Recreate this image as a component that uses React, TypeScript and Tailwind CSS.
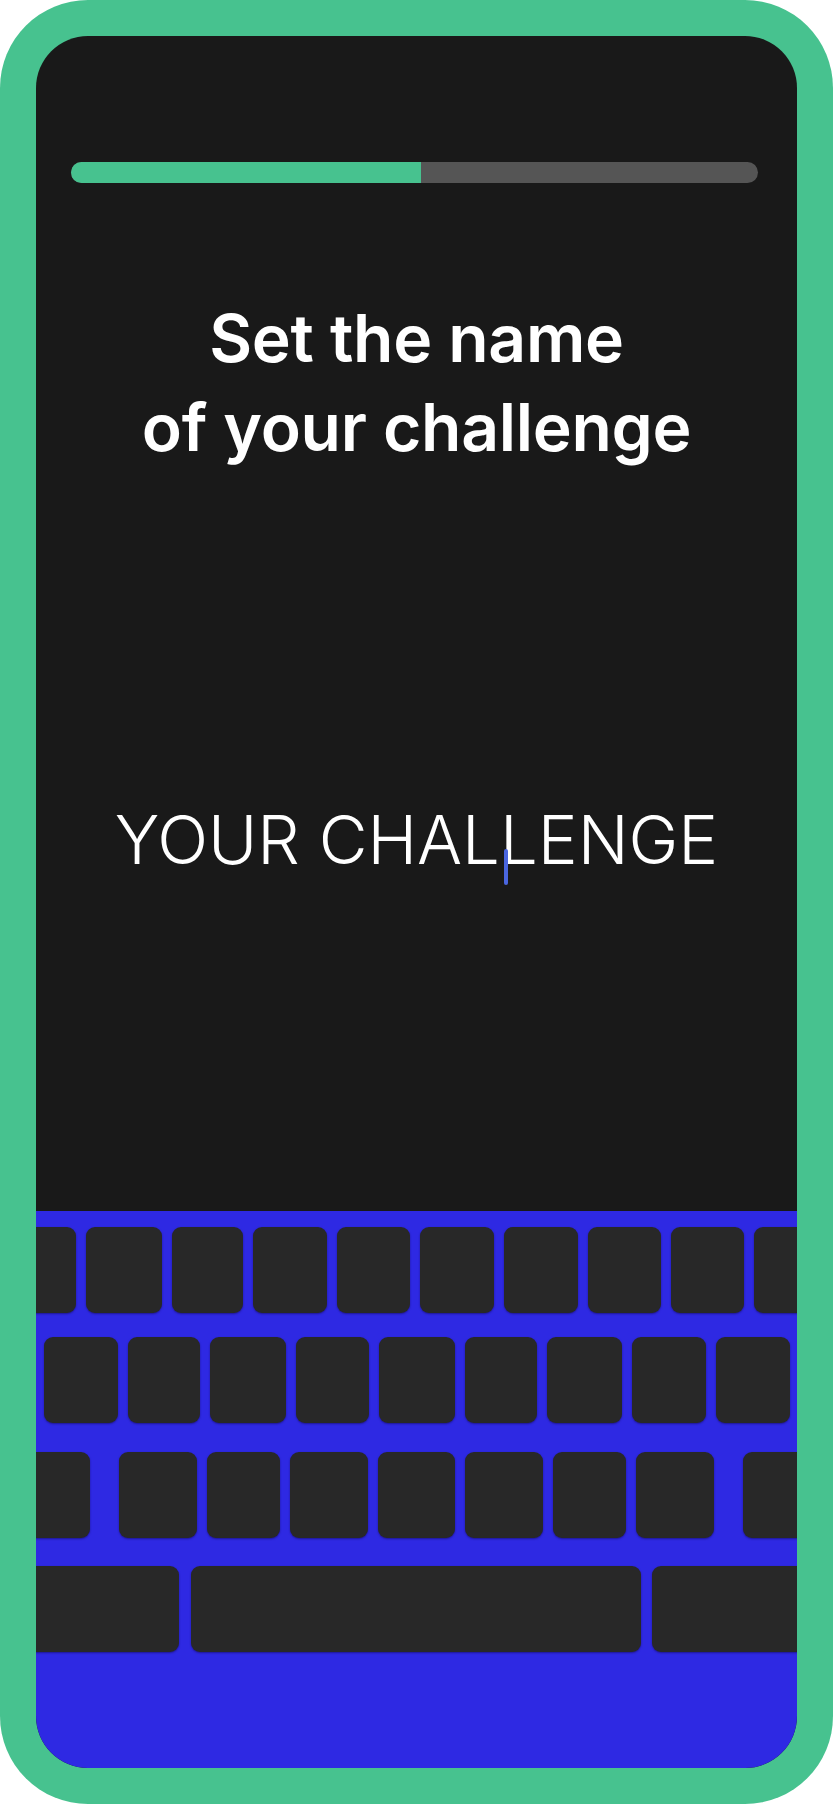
import React from 'react';

type Key = { w: string; ml: string };

// keyboard rows, widths and left offsets measured from the mock
const ROWS: Key[][] = [
  [
    { w: 'w-[73px]', ml: 'ml-[-33px]' },
    { w: 'w-[76px]', ml: 'ml-[10px]' },
    { w: 'w-[71px]', ml: 'ml-[10px]' },
    { w: 'w-[74px]', ml: 'ml-[10px]' },
    { w: 'w-[73px]', ml: 'ml-[10px]' },
    { w: 'w-[74px]', ml: 'ml-[10px]' },
    { w: 'w-[74px]', ml: 'ml-[10px]' },
    { w: 'w-[73px]', ml: 'ml-[10px]' },
    { w: 'w-[73px]', ml: 'ml-[10px]' },
    { w: 'w-[74px]', ml: 'ml-[10px]' },
  ],
  [
    { w: 'w-[74px]', ml: 'ml-[8px]' },
    { w: 'w-[72px]', ml: 'ml-[10px]' },
    { w: 'w-[76px]', ml: 'ml-[10px]' },
    { w: 'w-[73px]', ml: 'ml-[10px]' },
    { w: 'w-[76px]', ml: 'ml-[10px]' },
    { w: 'w-[72px]', ml: 'ml-[10px]' },
    { w: 'w-[75px]', ml: 'ml-[10px]' },
    { w: 'w-[74px]', ml: 'ml-[10px]' },
    { w: 'w-[74px]', ml: 'ml-[10px]' },
  ],
  [
    { w: 'w-[80px]', ml: 'ml-[-26px]' },
    { w: 'w-[78px]', ml: 'ml-[29px]' },
    { w: 'w-[73px]', ml: 'ml-[10px]' },
    { w: 'w-[78px]', ml: 'ml-[10px]' },
    { w: 'w-[77px]', ml: 'ml-[10px]' },
    { w: 'w-[78px]', ml: 'ml-[10px]' },
    { w: 'w-[73px]', ml: 'ml-[10px]' },
    { w: 'w-[78px]', ml: 'ml-[10px]' },
    { w: 'w-[80px]', ml: 'ml-[29px]' },
  ],
  [
    { w: 'w-[183px]', ml: 'ml-[-40px]' },
    { w: 'w-[450px]', ml: 'ml-[12px]' },
    { w: 'w-[180px]', ml: 'ml-[11px]' },
  ],
];

const ROW_GAPS = ['mt-[16px]', 'mt-[24px]', 'mt-[29px]', 'mt-[28px]'];

const Keyboard = () => (
  <div className="h-[557px] shrink-0 bg-[#2e29e3] overflow-hidden">
    {ROWS.map((row, r) => (
      <div key={r} className={`flex ${ROW_GAPS[r]}`}>
        {row.map((k, i) => (
          <div
            key={i}
            className={`${k.w} ${k.ml} h-[86px] shrink-0 rounded-[9px] bg-[#282828] shadow-[0_1px_2px_rgba(20,10,90,0.6)]`}
          />
        ))}
      </div>
    ))}
  </div>
);

export default function App() {
  return (
    <div className="w-[833px] h-[1804px] bg-white">
      <div className="w-full h-full rounded-[88px] bg-[#47c28f] p-[36px]">
        <div className="w-full h-full rounded-[52px] bg-[#191919] overflow-hidden flex flex-col">
          <div className="flex-1 flex flex-col">
            {/* progress */}
            <div className="mt-[126px] ml-[35px] w-[687px] h-[21px] rounded-full bg-[#555555] overflow-hidden flex">
              <div className="w-[350px] h-full bg-[#47c28f]" />
            </div>

            <h1
              className="mt-[111px] text-center text-white font-semibold text-[66px] leading-[89px] tracking-[-0.3px]"
              style={{ fontFamily: 'Inter, "Noto Sans", sans-serif' }}
            >
              Set the name
              <br />
              of your challenge
            </h1>

            <p
              className="mt-[334px] text-center text-white font-light text-[67px] leading-none"
              style={{ fontFamily: 'Inter, "Noto Sans", sans-serif' }}
            >
              YOUR CHAL
              <span className="relative inline-block w-0 h-0">
                <span className="absolute left-[4px] top-[-15px] w-[4px] h-[36px] rounded-full bg-[#4a66e0]" />
              </span>
              LENGE
            </p>
          </div>

          <Keyboard />
        </div>
      </div>
    </div>
  );
}
